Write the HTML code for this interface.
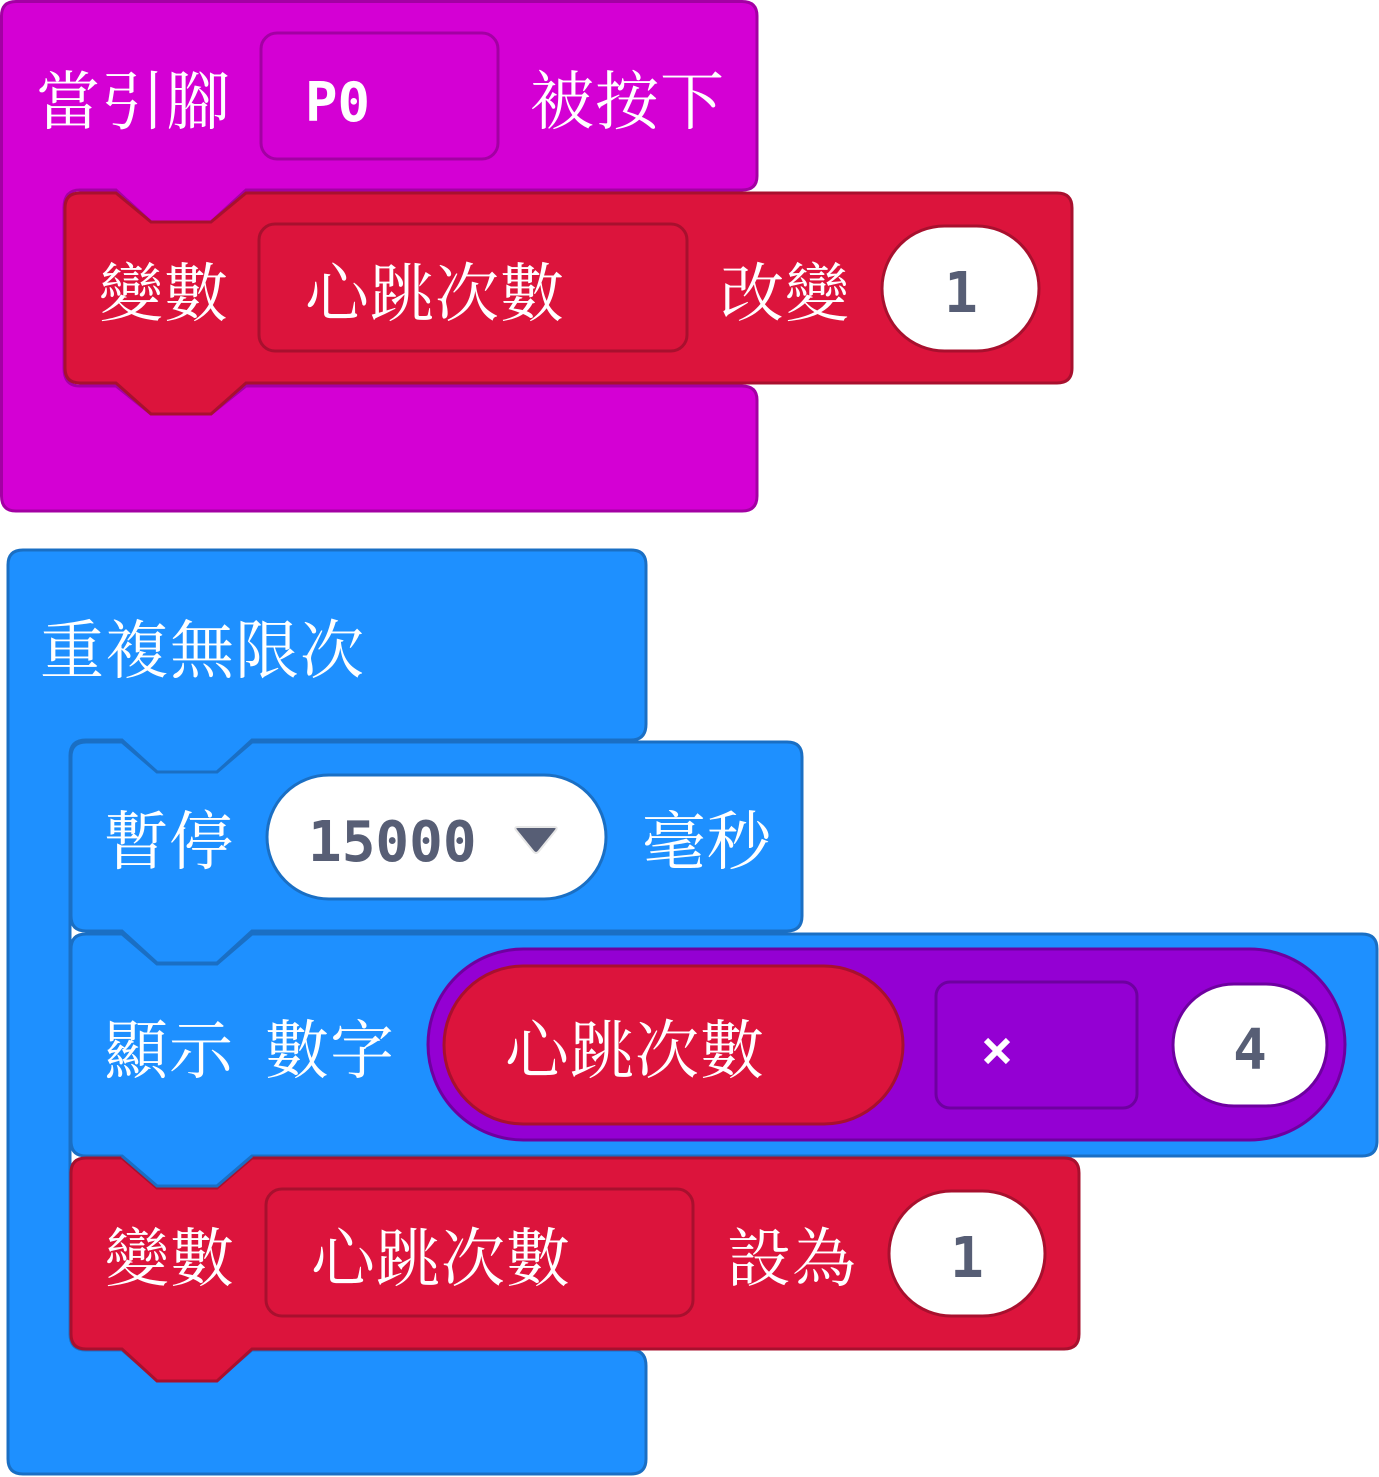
<!DOCTYPE html>
<html><head><meta charset="utf-8"><style>
html,body{margin:0;padding:0;background:#fff;}
svg{display:block;}
.t{font-family:"Liberation Serif","Noto Serif CJK SC","Noto Sans CJK TC",serif;font-size:64px;fill:#fff;letter-spacing:1px;}
.n{font-family:"DejaVu Sans Mono","Liberation Mono",monospace;font-weight:bold;font-size:56px;fill:#575e75;}
</style></head><body>
<svg width="1379" height="1477" viewBox="0 0 1379 1477" xmlns="http://www.w3.org/2000/svg">
<!-- purple hat -->
<path d="M1.5,16 Q1.5,1.5 16,1.5 H742 Q757,1.5 757,16 V176 Q757,190 742,190 H246 L211,222 H151 L116,190 H80 Q64,190 64,208 V368 Q64,386 80,386 H116 L151,414 H211 L246,386 H742 Q757,386 757,400 V496 Q757,511 742,511 H16 Q1.5,511 1.5,496 Z" fill="#d400d4" stroke="#a300a3" stroke-width="3"/>
<rect x="261" y="33" width="237" height="126" rx="16" fill="#d400d4" stroke="#a300a3" stroke-width="3"/>
<text class="t" x="36" y="124">當引腳</text>
<text class="n" x="305" y="121" style="fill:#fff;font-size:54px">P0</text>
<text class="t" x="530" y="124">被按下</text>
<!-- red change block -->
<path d="M65,208 Q65,193 80,193 H116 L151,222 H211 L246,193 H1057 Q1072,193 1072,208 V368 Q1072,383 1057,383 H246 L211,414 H151 L116,383 H80 Q65,383 65,368 Z" fill="#dc143c" stroke="#a8102e" stroke-width="3"/>
<rect x="259" y="224" width="428" height="127" rx="16" fill="#dc143c" stroke="#a8102e" stroke-width="3"/>
<text class="t" x="99" y="316">變數</text>
<text class="t" x="305" y="316">心跳次數</text>
<text class="t" x="720" y="316">改變</text>
<rect x="882" y="226" width="157" height="125" rx="62.5" fill="#fff" stroke="#a8102e" stroke-width="3"/>
<text class="n" x="961" y="312" text-anchor="middle">1</text>
<!-- blue loop -->
<path d="M8,565 Q8,550 23,550 H631 Q646,550 646,565 V724 Q646,740 631,740 H252 L217,772 H157 L122,740 H86 Q70,740 70,756 V1334 Q70,1350 86,1350 H122 L157,1380 H217 L252,1350 H631 Q646,1350 646,1366 V1459 Q646,1474 631,1474 H23 Q8,1474 8,1459 Z" fill="#1e90ff" stroke="#1a6fc4" stroke-width="3"/>
<text class="t" x="40" y="673">重複無限次</text>
<!-- show number -->
<path d="M71,949 Q71,934 86,934 H122 L157,964 H217 L252,934 H1362 Q1377,934 1377,949 V1141 Q1377,1156 1362,1156 H252 L217,1186 H157 L122,1156 H86 Q71,1156 71,1141 Z" fill="#1e90ff" stroke="#1a6fc4" stroke-width="3"/>
<!-- pause -->
<path d="M71,757 Q71,742 86,742 H122 L157,772 H217 L252,742 H787 Q802,742 802,757 V916 Q802,931 787,931 H252 L217,963 H157 L122,931 H86 Q71,931 71,916 Z" fill="#1e90ff" stroke="#1a6fc4" stroke-width="3"/>
<text class="t" x="104" y="864">暫停</text>
<rect x="267" y="775" width="339" height="124" rx="62" fill="#fff" stroke="#1a6fc4" stroke-width="3"/>
<text class="n" x="308" y="861">15000</text>
<path d="M516,830 Q514,827 518,827 H554 Q558,827 556,830 L539,851 Q536,855 533,851 Z" fill="#575e75" stroke="#e6e6e6" stroke-width="2"/>
<text class="t" x="642" y="864">毫秒</text>
<text class="t" x="104" y="1073">顯示</text>
<text class="t" x="265" y="1073">數字</text>
<rect x="428" y="949" width="917" height="191" rx="95.5" fill="#9400d3" stroke="#6e00a0" stroke-width="3"/>
<rect x="444" y="966" width="459" height="158" rx="79" fill="#dc143c" stroke="#a8102e" stroke-width="3"/>
<text class="t" x="505" y="1073">心跳次數</text>
<rect x="936" y="982" width="201" height="126" rx="14" fill="#9400d3" stroke="#6e00a0" stroke-width="3"/>
<path d="M986,1040 L1008,1062 M1008,1040 L986,1062" stroke="#fff" stroke-width="6"/>
<rect x="1173" y="984" width="154" height="122" rx="61" fill="#fff" stroke="#6e00a0" stroke-width="3"/>
<text class="n" x="1250" y="1069" text-anchor="middle">4</text>
<!-- set block -->
<path d="M71,1173 Q71,1158 86,1158 H122 L157,1188 H217 L252,1158 H1064 Q1079,1158 1079,1173 V1334 Q1079,1349 1064,1349 H252 L217,1381 H157 L122,1349 H86 Q71,1349 71,1334 Z" fill="#dc143c" stroke="#a8102e" stroke-width="3"/>
<path d="M122,1156 L157,1186 H217 L252,1156" fill="none" stroke="#1a6fc4" stroke-width="3"/>
<rect x="266" y="1189" width="427" height="127" rx="16" fill="#dc143c" stroke="#a8102e" stroke-width="3"/>
<text class="t" x="105" y="1281">變數</text>
<text class="t" x="311" y="1281">心跳次數</text>
<text class="t" x="727" y="1281">設為</text>
<rect x="889" y="1191" width="156" height="125" rx="62.5" fill="#fff" stroke="#a8102e" stroke-width="3"/>
<text class="n" x="967" y="1277" text-anchor="middle">1</text>
</svg>
</body></html>
